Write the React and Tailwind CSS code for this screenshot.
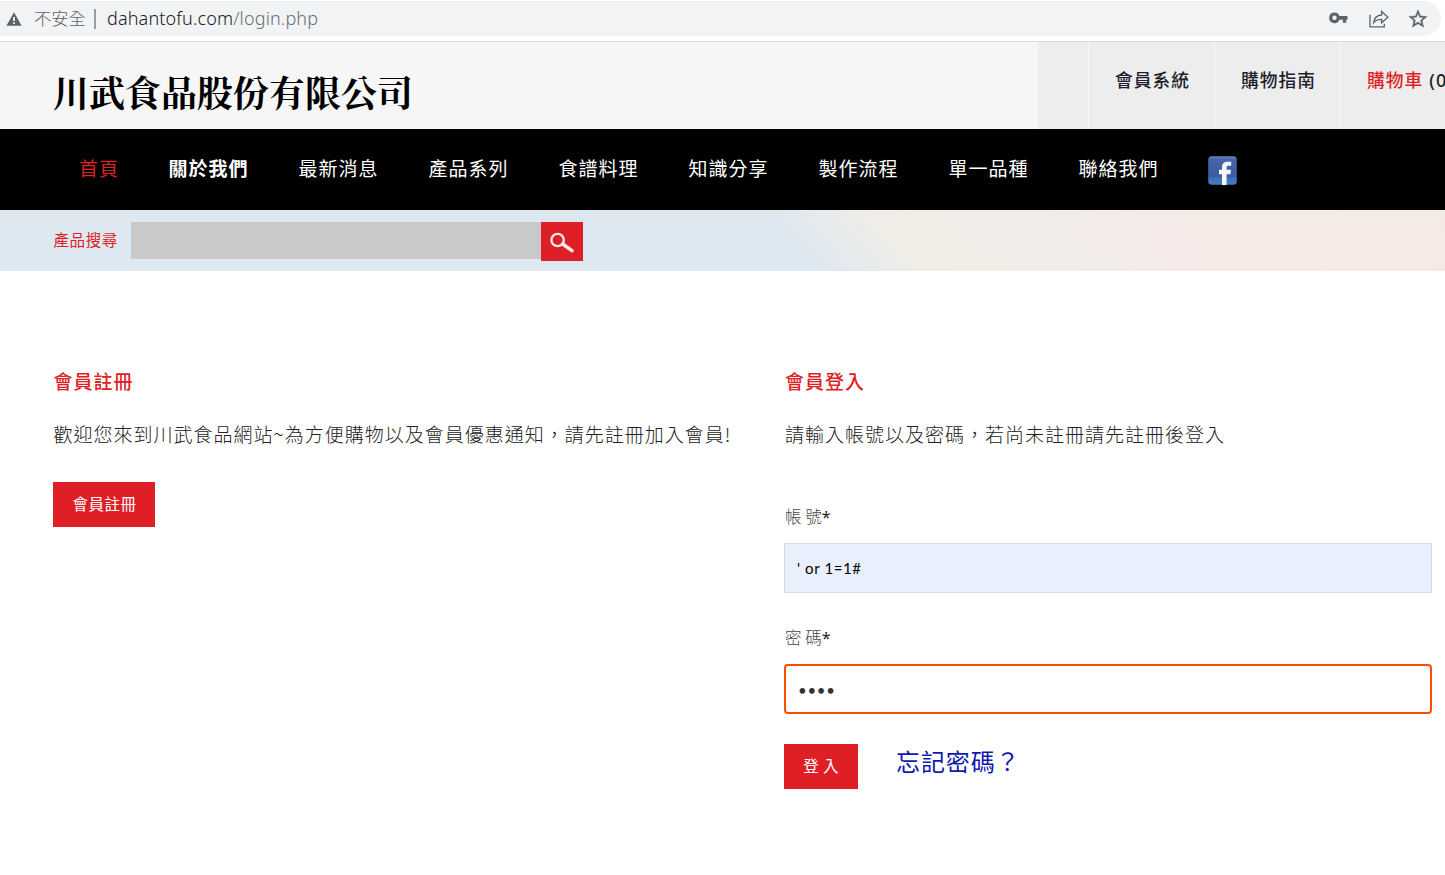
import React, { useState } from 'react';

const menuItems = [
  '關於我們',
  '最新消息',
  '產品系列',
  '食譜料理',
  '知識分享',
  '製作流程',
  '單一品種',
  '聯絡我們',
];

const AddressBar = () => (
  <div className="h-[42px] shrink-0 border-b border-[#d9dadc] bg-white pt-px pr-1">
    <div className="flex h-[35px] items-center rounded-r-full rounded-l-lg bg-[#f1f3f4] pr-[12px] pl-[6px]">
      <svg width="16" height="14" viewBox="0 0 16 14" className="shrink-0">
        <path d="M8 0.2 15.6 13.8H0.4Z" fill="#5f6368" />
        <path d="M7.1 5h1.8v4H7.1zM7.1 10.2h1.8V12H7.1z" fill="#f1f3f4" />
      </svg>
      <span className="ml-[12px] w-[53px] pb-[2px] text-[17.3px] font-light leading-[33px] whitespace-nowrap text-[#5f6368]">不安全</span>
      <span className="ml-[7px] h-5 w-[2px] bg-[#9a9da1]" />
      <span className="ml-[11px] font-['Noto_Sans'] text-[18px] leading-[35px] font-light tracking-[0.15px] whitespace-nowrap text-[#202124]">
        dahantofu.com<span className="text-[#6b6f74]">/login.php</span>
      </span>
      <div className="ml-auto flex items-center">
        <svg width="19" height="12" viewBox="0 0 19 12" className="mb-[2px]">
          <path d="M5.5 0.5a5.3 5.3 0 1 0 4.9 7.2h3.5v3.1h3.3V7.7h1.3V3.9H10.4A5.3 5.3 0 0 0 5.5 0.5zM5.5 3.6a2.2 2.2 0 1 1 0 4.4 2.2 2.2 0 0 1 0-4.4z" fill="#5f6368" fillRule="evenodd" />
        </svg>
        <svg width="20" height="18" viewBox="0 0 20 18" fill="none" stroke="#5f6368" strokeWidth="1.3" className="ml-[21px]">
          <path d="M1 4.8V16.9H15.3V13.8" />
          <path d="M4.7 12.6C5.2 8.2 7.8 5.3 12.6 5V1.4L18.9 7.2 12.6 12.8V9.3C9.2 9.2 6.7 10.2 4.7 12.6Z" />
        </svg>
        <svg width="22" height="22" viewBox="0 0 24 24" className="ml-[18px]">
          <path d="M22 9.24l-7.19-.62L12 2 9.19 8.63 2 9.24l5.46 4.73L5.82 21 12 17.27 18.18 21l-1.63-7.03L22 9.24zM12 15.4l-3.76 2.27 1-4.28-3.32-2.88 4.38-.38L12 6.1l1.71 4.04 4.38.38-3.32 2.88 1 4.28L12 15.4z" fill="#5f6368" stroke="#5f6368" strokeWidth="0.4" />
        </svg>
      </div>
    </div>
  </div>
);

const TopLinks = () => (
  <div className="flex h-full w-[407px] shrink-0 overflow-hidden bg-[#ededed] pl-[50px] text-[17.75px] leading-[75px] font-medium tracking-[1px] whitespace-nowrap text-[#1d1f2b]">
    <a href="#" className="w-[126px] shrink-0 border-l border-[#f8f8f8] pl-[26px]">會員系統</a>
    <a href="#" className="w-[126px] shrink-0 border-l border-[#f8f8f8] pl-[26px]">購物指南</a>
    <a href="#" className="w-[150px] shrink-0 border-l border-[#f8f8f8] pl-[26px]">
      <span className="text-[#de1f26]">購物車</span>
      <span className="ml-[6px] font-['Noto_Sans'] text-[18px]">(0)</span>
    </a>
  </div>
);

const FacebookIcon = () => (
  <svg width="30" height="30" viewBox="0 0 30 30">
    <defs>
      <linearGradient id="fb" x1="0" y1="0" x2="0" y2="1">
        <stop offset="0" stopColor="#6c86bb" />
        <stop offset="0.12" stopColor="#4765a8" />
        <stop offset="0.72" stopColor="#3b5a9f" />
        <stop offset="0.73" stopColor="#3a6cb8" />
        <stop offset="1" stopColor="#4a7cc4" />
      </linearGradient>
    </defs>
    <rect x="0.2" y="0.2" width="28.6" height="28.6" rx="3.5" fill="url(#fb)" />
    <path d="M14 29V18.2h-3v-4.4h3v-2.5c0-3.9 2.2-5.6 5.6-5.6h3.6v4h-2.4c-1.6 0-2.2.6-2.2 2v2.1h4.4l-.6 4.4h-3.8V29z" fill="#f4f6fa" />
  </svg>
);

const MainMenu = () => (
  <nav className="flex h-[81px] shrink-0 bg-black pl-[79px] text-[19px] leading-[77px] tracking-[1px] whitespace-nowrap text-white">
    <a href="#" className="w-[89.5px] text-[#de1f26]">首頁</a>
    {menuItems.map((item, i) => (
      <a href="#" key={item} className={i === 0 ? 'w-[130px] font-bold' : 'w-[130px]'}>
        {item}
      </a>
    ))}
    <a href="#" className="-ml-[1px] pt-[27px]">
      <FacebookIcon />
    </a>
  </nav>
);

const SearchBar = () => (
  <div className="flex h-[61px] shrink-0 bg-[linear-gradient(50deg,#dee8f1_0%,#dee8f1_54.5%,#f0ede6_62%,#f1ece8_74%,#f5eae7_79%,#f5eae4_88%,#f5e9e5_100%)] pl-[53px]">
    <label className="w-[78px] pl-[0.5px] text-[15.5px] leading-[58px] tracking-[0.6px] text-[#de1f26]">產品搜尋</label>
    <input className="mt-3 h-[37px] w-[410px] bg-[#c9c9c9] px-3 outline-none" />
    <button className="mt-3 flex h-[39px] w-[42px] items-center justify-center bg-[#de1f26]">
      <svg width="26" height="22" viewBox="0 0 26 22" fill="none" stroke="#f6e9e9" className="mt-[2px]">
        <circle cx="8.6" cy="8" r="6.2" strokeWidth="2.3" />
        <path d="M13.6 12 23 18.6" strokeWidth="3.6" strokeLinecap="round" />
      </svg>
    </button>
  </div>
);

const Register = () => (
  <section className="w-[731px] shrink-0">
    <h2 className="h-[40px] pl-[0.5px] text-[19px] leading-[38px] font-medium tracking-[1px] text-[#de1f26]">會員註冊</h2>
    <p className="mt-[12px] pl-[0.5px] text-[19px] leading-[40px] font-light tracking-[1px] whitespace-nowrap text-[#222]">
      歡迎您來到川武食品網站~為方便購物以及會員優惠通知，請先註冊加入會員!
    </p>
    <button className="mt-[28px] h-[45px] w-[102px] bg-[#de1f26] pb-[2px] pl-px text-[15.5px] leading-[43px] tracking-[0.5px] text-white">會員註冊</button>
  </section>
);

const Login = () => {
  const [account, setAccount] = useState("' or 1=1#");
  const [password, setPassword] = useState('1234');

  return (
    <section className="w-[648px] shrink-0">
      <h2 className="h-[40px] pl-px text-[19px] leading-[38px] font-medium tracking-[1px] text-[#de1f26]">會員登入</h2>
      <p className="mt-[12px] pl-px text-[19px] leading-[40px] font-light tracking-[1px] whitespace-nowrap text-[#222]">
        請輸入帳號以及密碼，若尚未註冊請先註冊後登入
      </p>
      <label className="mt-[48px] block h-[30px] pl-px text-[16.5px] leading-[29px] font-light text-[#444]">
        帳 號<span className="font-['Noto_Sans'] text-[16px] font-normal text-[#1d1f2b]">*</span>
      </label>
      <input
        value={account}
        onChange={(e) => setAccount(e.target.value)}
        className="mt-[11px] block h-[50px] w-full border border-[#d9d9d9] bg-[#e8f0fe] px-[12px] font-['Lato'] text-[15px] tracking-[0.6px] text-black outline-none"
      />
      <label className="mt-[30px] block h-[30px] pl-px text-[16.5px] leading-[29px] font-light text-[#444]">
        密 碼<span className="font-['Noto_Sans'] text-[16px] font-normal text-[#1d1f2b]">*</span>
      </label>
      <input
        type="password"
        value={password}
        onChange={(e) => setPassword(e.target.value)}
        className="mt-[11px] block h-[50px] w-full rounded-[4px] border-2 border-[#ff4d00] bg-white px-[12px] pt-[2px] font-['Lato'] text-[15px] tracking-[0.7px] text-[#333] outline-none"
      />
      <div className="mt-[30px] flex">
        <button className="h-[45px] w-[74px] bg-[#de1f26] pb-[2px] text-[15.5px] leading-[43px] tracking-[0.4px] text-white">登 入</button>
        <a href="#" className="ml-[38px] text-[24px] leading-[34px] tracking-[0.9px] text-[#1018b0]">忘記密碼？</a>
      </div>
    </section>
  );
};

const App = () => {
  return (
    <div className="flex h-[875px] w-[1445px] flex-col overflow-hidden bg-white font-['Noto_Sans_CJK_TC',sans-serif]">
      <AddressBar />
      <header className="flex h-[87px] shrink-0 justify-between bg-[#f6f6f6]">
        <h1 className="pl-[53px] font-['Noto_Serif_CJK_TC','Noto_Sans_CJK_TC',serif] text-[36px] leading-[99px] font-bold whitespace-nowrap text-black">
          川武食品股份有限公司
        </h1>
        <TopLinks />
      </header>
      <MainMenu />
      <SearchBar />
      <main className="flex pt-[91px] pl-[53px]">
        <Register />
        <Login />
      </main>
    </div>
  );
};

export default App;
